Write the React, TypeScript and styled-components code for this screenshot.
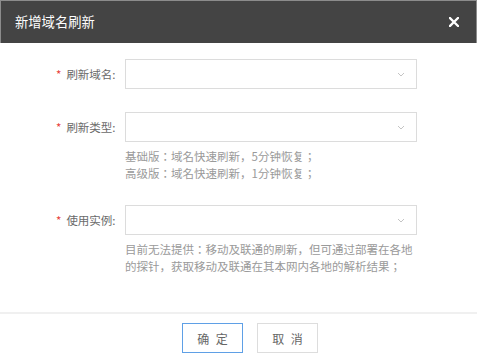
import React from "react";
import styled, { createGlobalStyle } from "styled-components";

const GlobalStyle = createGlobalStyle`
  html, body {
    margin: 0;
    padding: 0;
    background: #ffffff;
  }
  body {
    font-family: "Noto Sans CJK SC", "Liberation Sans", sans-serif;
  }
  * { box-sizing: border-box; }
`;

const Dialog = styled.div`
  width: 477px;
  display: flex;
  flex-direction: column;
  background: #fff;
`;

const Header = styled.div`
  height: 43px;
  background: #444444;
  border: 1px solid #8c8c8c;
  border-bottom: none;
  display: flex;
  align-items: center;
  justify-content: space-between;
  padding: 0 16px 0 14px;
`;

const Title = styled.div`
  color: #ffffff;
  font-size: 13.3px;
  line-height: 20px;
`;

const CloseButton = styled.button`
  border: none;
  background: transparent;
  padding: 0;
  width: 12px;
  height: 12px;
  display: flex;
  align-items: center;
  justify-content: center;
  cursor: pointer;
`;

const Body = styled.div`
  padding: 16px 0 37px;
`;

const Form = styled.div`
  display: flex;
  flex-direction: column;
  gap: 23px;
`;

const Row = styled.div`
  display: grid;
  grid-template-columns: 125px 292px;
`;

const Label = styled.label`
  height: 30px;
  display: flex;
  align-items: center;
  padding-left: 56px;
  font-size: 11.5px;
  color: #6a6a6a;
  white-space: nowrap;
`;

const Star = styled.span`
  color: #e8413b;
  margin-right: 5px;
  font-size: 11.5px;
`;

const Select = styled.div`
  height: 30px;
  border: 1px solid #dcdcdc;
  background: #fff;
  display: flex;
  align-items: center;
  justify-content: flex-end;
  padding-right: 11px;
`;

const Hint = styled.div`
  grid-column: 2;
  margin-top: 6px;
  font-family: "Noto Sans CJK JP", "Noto Sans CJK SC", sans-serif;
  font-size: 11.5px;
  line-height: 17px;
  color: #9a9a9a;
`;

const Footer = styled.div`
  border-top: 2px solid #f0f0f0;
  padding: 9px 0 9px 23px;
  display: flex;
  justify-content: center;
  gap: 14px;
`;

const Button = styled.button<{ $primary?: boolean }>`
  width: 61px;
  height: 30px;
  background: #fff;
  border: 1px solid ${(p) => (p.$primary ? "#5fa0e6" : "#dddddd")};
  color: #666666;
  font-family: "Noto Sans CJK SC", sans-serif;
  font-size: 12px;
  letter-spacing: 2px;
  padding: 0 0 0 2px;
  cursor: pointer;
`;

const Chevron = () => (
  <svg width="8" height="5" viewBox="0 0 8 5">
    <polyline points="1,1 4,4 7,1" fill="none" stroke="#c4c4c4" strokeWidth="1" />
  </svg>
);

const CloseIcon = () => (
  <svg width="10" height="10" viewBox="0 0 10 10">
    <path d="M1 1 L9 9 M9 1 L1 9" stroke="#ffffff" strokeWidth="2.3" strokeLinecap="square" />
  </svg>
);

const fields: { label: string; hint?: string[] }[] = [
  { label: "刷新域名:" },
  {
    label: "刷新类型:",
    hint: ["基础版：域名快速刷新，5分钟恢复；", "高级版：域名快速刷新，1分钟恢复；"],
  },
  {
    label: "使用实例:",
    hint: ["目前无法提供：移动及联通的刷新，但可通过部署在各地的探针，获取移动及联通在其本网内各地的解析结果；"],
  },
];

export default function App() {
  return (
    <>
      <GlobalStyle />
      <Dialog>
        <Header>
          <Title>新增域名刷新</Title>
          <CloseButton aria-label="关闭">
            <CloseIcon />
          </CloseButton>
        </Header>
        <Body>
          <Form>
            {fields.map((f) => (
              <Row key={f.label}>
                <Label>
                  <Star>*</Star>
                  {f.label}
                </Label>
                <Select>
                  <Chevron />
                </Select>
                {f.hint && (
                  <Hint>
                    {f.hint.map((h) => (
                      <div key={h}>{h}</div>
                    ))}
                  </Hint>
                )}
              </Row>
            ))}
          </Form>
        </Body>
        <Footer>
          <Button $primary>确 定</Button>
          <Button>取 消</Button>
        </Footer>
      </Dialog>
    </>
  );
}
